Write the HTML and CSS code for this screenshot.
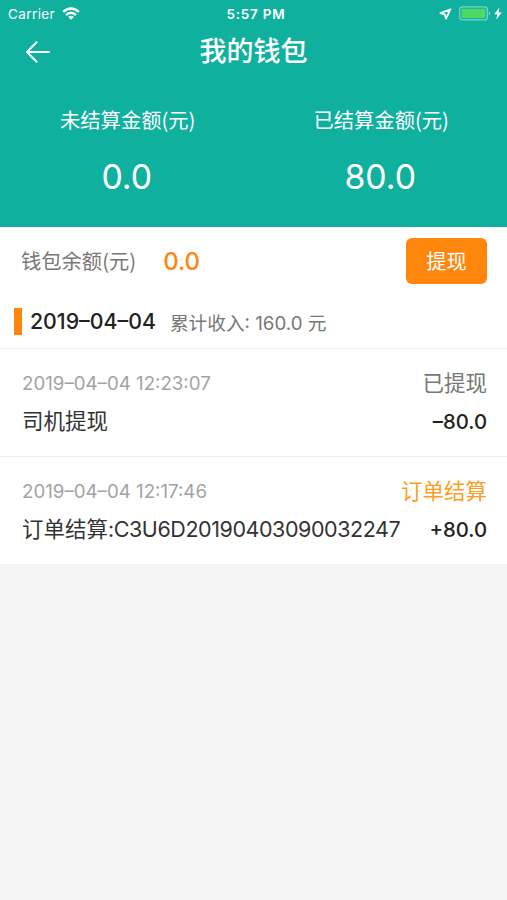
FILE: index.html
```
<!DOCTYPE html>
<html lang="zh-CN">
<head>
    <meta charset="UTF-8">
    <meta name="viewport" content="width=device-width, initial-scale=1">
    <title>我的钱包</title>
    <link rel="stylesheet" href="styles.css">
</head>
<body>
    <div class="header">
        <div class="status-bar">
            <div class="status-left">
                <span class="carrier">Carrier</span>
                <svg class="wifi" width="18" height="13" viewBox="0 0 18 13">
                    <g fill="none" stroke="#fff" stroke-width="2.4">
                        <path d="M1.2 4.9 Q9 -1.9 16.8 4.9"/>
                        <path d="M4.1 8 Q9 3.7 13.9 8"/>
                    </g>
                    <path d="M6.1 9.9 Q9 7.6 11.9 9.9 L9 12.8 Z" fill="#fff"/>
                </svg>
            </div>
            <span class="time">5:57 PM</span>
            <div class="status-right">
                <svg width="13" height="12" viewBox="0 0 13 12">
                    <path d="M11.4 1.3 L1.4 5.2 L5.7 6.4 L7 10.6 Z" fill="none" stroke="#fff" stroke-width="1.8" stroke-linejoin="round"/>
                </svg>
                <svg class="battery" width="32" height="15" viewBox="0 0 32 15">
                    <rect x=".6" y=".9" width="27.8" height="13" rx="3" fill="none" stroke="#fff" stroke-opacity=".45" stroke-width="1.2"/>
                    <rect x="2.5" y="2.8" width="24" height="9.2" rx="1" fill="#4cd964"/>
                    <path d="M29.8 5 Q32.4 7.4 29.8 9.8 Z" fill="#fff" fill-opacity=".5"/>
                </svg>
                <svg class="bolt" width="8" height="13" viewBox="0 0 8 13">
                    <path d="M5.4 .6 L.2 7.3 H3.3 L2.3 12.4 L7.8 5.4 H4.6 Z" fill="#fff"/>
                </svg>
            </div>
        </div>
        <div class="nav-bar">
            <svg class="back" width="26" height="24" viewBox="0 0 26 24">
                <path d="M11.5 2.2 L2 12 L11.5 21.8 M2 12 H24" fill="none" stroke="#fff" stroke-width="2" stroke-linecap="round" stroke-linejoin="round"/>
            </svg>
            <h1>我的钱包</h1>
        </div>
        <div class="amounts">
            <div class="amount">
                <div class="amount-label">未结算金额(元)</div>
                <div class="amount-value">0.0</div>
            </div>
            <div class="amount">
                <div class="amount-label">已结算金额(元)</div>
                <div class="amount-value">80.0</div>
            </div>
        </div>
    </div>
    <div class="balance">
        <span class="balance-label">钱包余额(元)</span>
        <span class="balance-value">0.0</span>
        <button class="withdraw">提现</button>
    </div>
    <div class="day">
        <span class="day-date">2019–04–04</span>
        <span class="day-total">累计收入: 160.0 元</span>
    </div>
    <div class="record">
        <div class="row">
            <span class="record-time">2019–04–04 12:23:07</span>
            <span class="record-status">已提现</span>
        </div>
        <div class="row">
            <span class="record-name">司机提现</span>
            <span class="record-money">–80.0</span>
        </div>
    </div>
    <div class="record">
        <div class="row">
            <span class="record-time">2019–04–04 12:17:46</span>
            <span class="record-status orange">订单结算</span>
        </div>
        <div class="row">
            <span class="record-name">订单结算<span class="order-no">:C3U6D20190403090032247</span></span>
            <span class="record-money">+80.0</span>
        </div>
    </div>
</body>
</html>
```
FILE: styles.css
```
* {
    box-sizing: border-box;
}

body {
    margin: 0;
    background-color: #f5f5f5;
    font-family: Inter, "Noto Sans CJK SC", sans-serif;
    color: #333;
    white-space: nowrap;
}

.header {
    height: 227px;
    background-color: #10b09f;
    color: #fff;
}

.status-bar {
    display: grid;
    grid-template-columns: 1fr auto 1fr;
    align-items: center;
    height: 27px;
    padding: 0 5px 0 8px;
    font-size: 13.5px;
}

.status-left,
.status-right {
    display: flex;
    align-items: center;
}

.status-left {
    gap: 7px;
}

.status-right {
    justify-content: flex-end;
}

.carrier {
    letter-spacing: 0.4px;
}

.time {
    padding-left: 2px;
    font-weight: 600;
    letter-spacing: 0.8px;
}

.battery {
    margin-left: 7px;
}

.bolt {
    margin-left: 3px;
}

.nav-bar {
    display: grid;
    grid-template-columns: 1fr auto 1fr;
    align-items: center;
    height: 50px;
    padding: 0 25px;
}

h1 {
    margin: 0;
    font-size: 27px;
    font-weight: 500;
    line-height: 40px;
}

.amounts {
    display: flex;
    padding-top: 27px;
}

.amount {
    flex: 1;
    text-align: center;
}

.amount-label {
    padding-left: 2px;
    font-family: "Noto Sans CJK SC", sans-serif;
    font-size: 20.3px;
    line-height: 30px;
}

.amount-value {
    margin-top: 23px;
    font-size: 33.8px;
    line-height: 40px;
}

.balance {
    display: flex;
    align-items: center;
    height: 68px;
    padding: 0 20px 0 21px;
    background-color: #fff;
}

.balance-label {
    padding-bottom: 2px;
    font-family: "Noto Sans CJK SC", sans-serif;
    font-size: 20.3px;
    color: #777;
}

.balance-value {
    margin-left: 27px;
    font-size: 24px;
    font-weight: 500;
    color: #ff860d;
}

.withdraw {
    width: 81px;
    height: 46px;
    margin-left: auto;
    padding: 0 0 2px;
    border: none;
    border-radius: 6px;
    background-color: #ff860d;
    font-family: inherit;
    font-size: 20.3px;
    color: #fff;
}

.day {
    display: flex;
    align-items: center;
    height: 53px;
    padding-left: 14px;
    background-color: #fff;
}

.day-date {
    padding-left: 8px;
    border-left: 8px solid #ff860d;
    font-size: 21.3px;
    font-weight: 500;
    line-height: 27px;
    color: #222;
}

.day-total {
    margin-left: 14px;
    padding-bottom: 1px;
    font-size: 18.7px;
    color: #777;
}

.record {
    height: 108px;
    padding: 15px 20px 0 22px;
    border-top: 1px solid #eee;
    background-color: #fff;
}

.row {
    display: flex;
    align-items: center;
    justify-content: space-between;
    height: 38px;
}

.record-time {
    font-size: 18.7px;
    color: #a3a3a3;
}

.record-status {
    padding-bottom: 4px;
    font-size: 21.5px;
    color: #777;
}

.record-name {
    padding-bottom: 3px;
    font-size: 21.5px;
}

.order-no {
    letter-spacing: -0.44px;
}

.record-money {
    font-size: 20.3px;
    font-weight: 500;
    color: #222;
}

.orange {
    color: #ff9d1e;
}
```
